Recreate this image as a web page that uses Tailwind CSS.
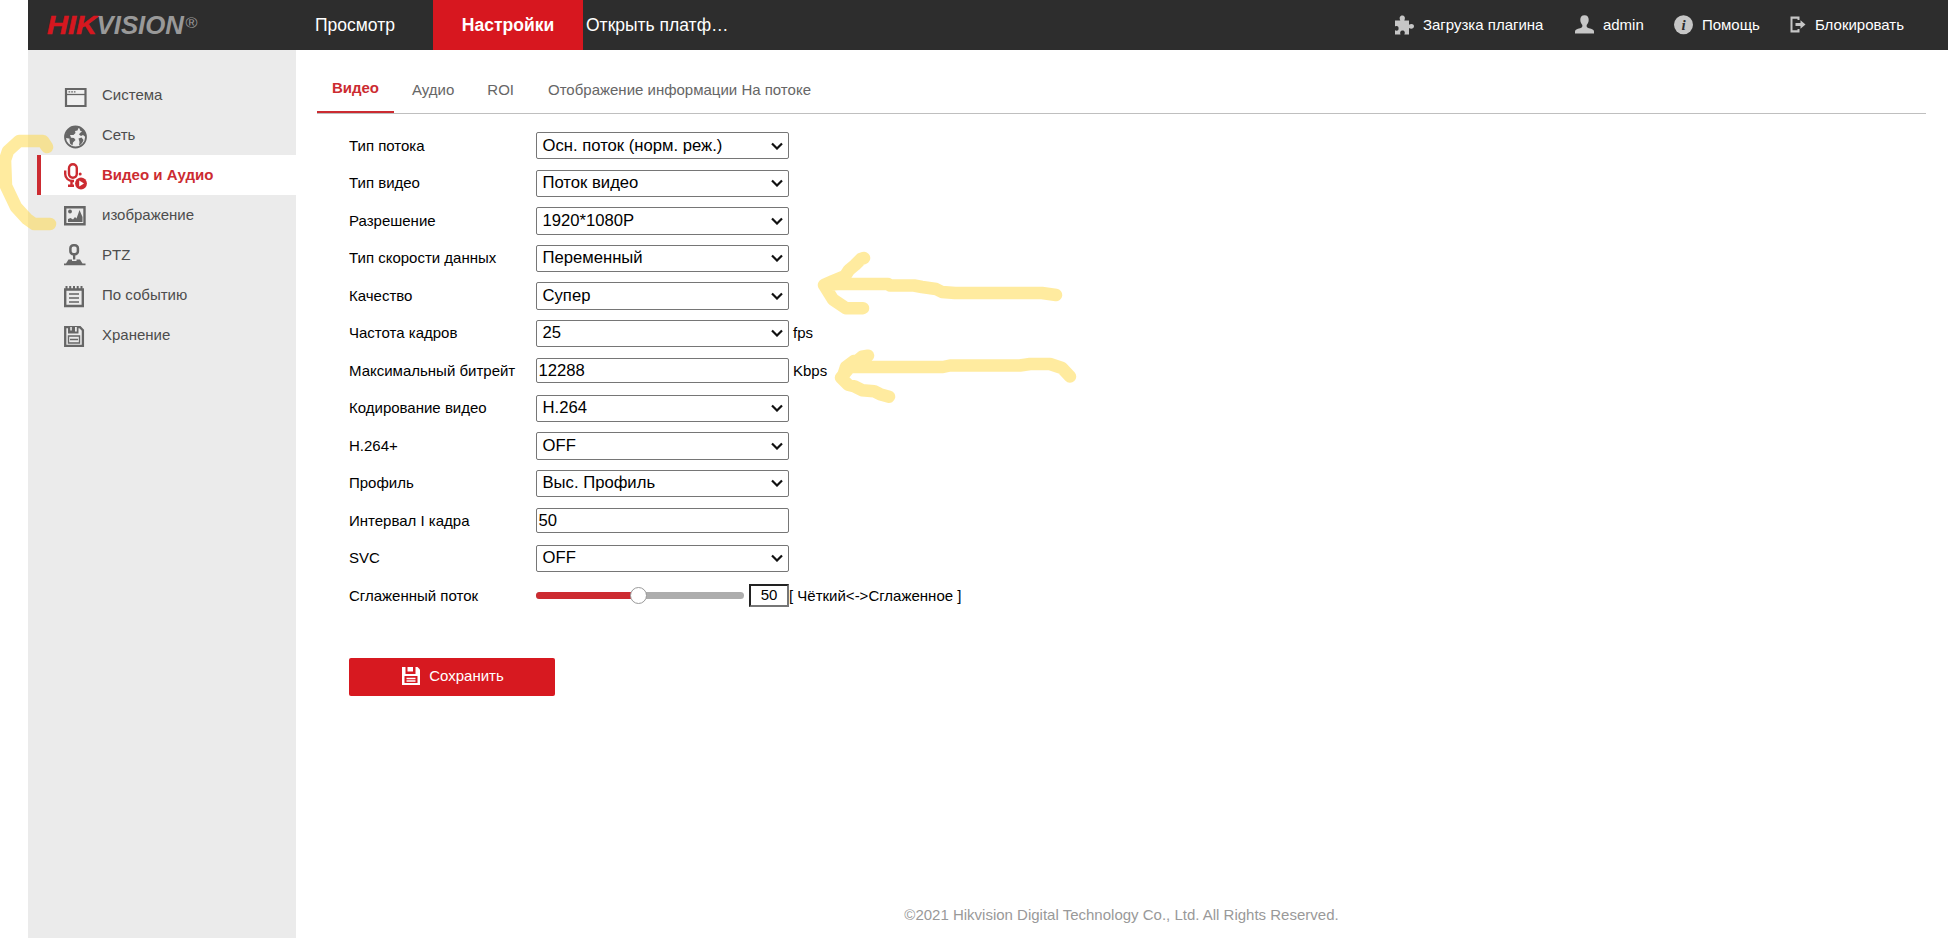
<!DOCTYPE html>
<html lang="ru">
<head>
<meta charset="utf-8">
<title>HIKVISION</title>
<script src="https://cdn.jsdelivr.net/npm/@tailwindcss/browser@4"></script>
</head>
<body class="relative h-[938px] w-[1948px] overflow-hidden bg-white pl-7 text-[15px] leading-5 text-black font-['Liberation_Sans',Arial,sans-serif]">
<header class="flex h-[50px] items-center bg-[#2d2d2d] text-white">
  <svg class="ml-4 h-[50px] w-[170px] shrink-0" viewBox="44 0 170 50" font-family="Liberation Sans" font-weight="bold" font-style="italic" font-size="25">
    <text x="47" y="33.5" fill="#d7171f" stroke="#d7171f" stroke-width=".5" textLength="50" lengthAdjust="spacingAndGlyphs">HIK</text>
    <text x="96.500" y="33.5" fill="#999" textLength="87.500" lengthAdjust="spacingAndGlyphs">VISION</text>
    <text x="185.500" y="27.500" fill="#999" font-size="15" font-weight="normal" font-style="normal" textLength="12" lengthAdjust="spacingAndGlyphs">®</text>
  </svg>
  <nav class="ml-[68px] flex h-full items-center text-[17.5px]">
    <a class="flex h-full w-[151px] items-center pl-[33px]">Просмотр</a>
    <a class="flex h-full w-[150px] items-center justify-center bg-[#d7171f] font-bold">Настройки</a>
    <a class="w-[150px] truncate pl-[3px]">Открыть платф…</a>
  </nav>
  <div class="ml-auto flex items-center pr-11">
    <svg class="mr-[9px] h-5 w-[19px]" viewBox="0 0 19 20" fill="#c6c6c6"><path d="M0 5.500h5.300C4 3 4.800.5 7.300.5S10.600 3 9.300 5.500H14v4.200c2.200-1.400 5-.8 5 1.600s-2.800 3.200-5 1.800V19.500H9.300c1.200-2.200.2-4-1.800-4s-3 1.800-2 4H0v-4.300c2 1 3.600.2 3.600-1.800S2 10.500 0 11.500z"/></svg>
    <span class="w-[152px]">Загрузка плагина</span>
    <svg class="mr-[9px] h-5 w-[19px]" viewBox="0 0 19 20" fill="#c6c6c6"><path d="M9.500.2c3 0 4.200 1.800 4.200 4.600 0 2.400-1 3.800-2 5.200-.3 1.800.2 2.700 2.300 3.200 3 .7 5 1.300 5 3.300v2H0v-2c0-2 2-2.600 5-3.300 2.100-.5 2.600-1.400 2.300-3.200-1-1.400-2-2.800-2-5.200C5.300 2 6.500.2 9.500.2z"/></svg>
    <span class="w-[71px]">admin</span>
    <svg class="mr-[9px] h-5 w-[19px]" viewBox="0 0 19 20"><circle cx="9.500" cy="9.700" r="9.500" fill="#c6c6c6"/><text x="9.500" y="14.500" text-anchor="middle" font-family="Liberation Serif" font-size="15" font-weight="bold" font-style="italic" fill="#2d2d2d">i</text></svg>
    <span class="w-[88px]">Помощь</span>
    <svg class="mr-[9px] h-[18px] w-4" viewBox="0 0 16 18" fill="#c6c6c6"><path d="M.5 .500h9v3.500H7.500V2.700h-5v11.600h5V13h2v3.500h-9z"/><path d="M5.500 7H10.500V4.300L15.500 8.500 10.500 12.700V10H5.500z"/></svg>
    <span>Блокировать</span>
  </div>
</header>
<div class="flex h-[888px]">
  <aside class="w-[268px] shrink-0 bg-[#ebebeb] pt-[25px] text-[#4d4d4d]">
    <a class="flex h-10 items-center gap-[15px] pl-[36px]">
      <svg class="mt-[5px] h-[28px] w-[23px]" viewBox="0 0 23 28" fill="none" stroke="#666"><path d="M2 5h19.500v17H2z" fill="#f0f0f0" stroke-width="2.200"/><path d="M2 10.500h19" stroke-width="1.300"/><path d="M4.500 7.800h7" stroke-dasharray="1.700 1" stroke-width="1.200"/></svg><span>Система</span></a>
    <a class="flex h-10 items-center gap-[15px] pl-[36px]">
      <svg class="mt-[1px] h-[28px] w-[23px]" viewBox="0 0 23 28"><circle cx="11.500" cy="15" r="10.500" fill="#ebebeb" stroke="#666" stroke-width="1.800"/><path fill="#666" d="M2 16C1 9 6 4 12 4.500l2.500 1.500-1 2.500-2.500.5.500 2-2 2H6l1 2.500-2 1zM5.500 15.500l4.500.5 1.500 2-2.500 2.500-.5 3-2.500-2-.5-4zM15.500 5.500c3.500 1 6.500 5 6 9.500l-2.500-2-2 1-2-1.500 1-1.500 2-1.500-2-1zM14.500 16.500l3-1 2 2.500c-1 3-2.500 4.500-4.500 5.500l.5-3.500z"/></svg><span>Сеть</span></a>
    <a class="ml-[9px] flex h-10 items-center gap-[15px] border-l-4 border-[#cc2b31] bg-white pl-[23px] font-bold text-[#cc2b31]">
      <svg class="mt-[2px] h-[28px] w-[23px]" viewBox="0 0 23 28" fill="none" stroke="#cc2b31"><rect x="5" y="2.200" width="7.800" height="13.500" rx="3.900" stroke-width="2.400"/><path d="M1.200 8.500v3.500c0 4 3.300 7 7.300 7h1.500M4 23.700h6M7.500 19v4" stroke-width="2.400"/><circle cx="16.200" cy="12" r="1.500" fill="#cc2b31" stroke="none"/><circle cx="17" cy="21.500" r="5.900" fill="#cc2b31" stroke="none"/><path d="M15.200 18.500v6l4.800-3z" fill="#fff" stroke="none"/></svg><span>Видео и Аудио</span></a>
    <a class="flex h-10 items-center gap-[15px] pl-[36px]">
      <svg class="h-[28px] w-[23px]" viewBox="0 0 23 28"><path d="M1.200 6.200h19.300v17H1.200z" fill="none" stroke="#666" stroke-width="2.400"/><circle cx="6" cy="10.500" r="1.900" fill="#666"/><path d="M4 21v-3l2.500-1 2.500 1.500 2-2.500 1.500 1.500 2-5.500L15.500 9l3 7v5z" fill="#666"/></svg><span>изображение</span></a>
    <a class="flex h-10 items-center gap-[15px] pl-[36px]">
      <svg class="h-[28px] w-[23px]" viewBox="0 0 23 28"><rect x="6.400" y="4.300" width="7.500" height="9" rx="3" fill="none" stroke="#666" stroke-width="2.500"/><path d="M9 14h2.300v4.500H9zM4.500 18.500h3.500v1.500h4.500v-1.500h3.500l2.500 4h3v1.700H-.5v-1.700h2.500z" fill="#666"/></svg><span>PTZ</span></a>
    <a class="flex h-10 items-center gap-[15px] pl-[36px]">
      <svg class="mt-1 h-[28px] w-[23px]" viewBox="0 0 23 28" fill="none" stroke="#666"><path d="M1.200 6.500h17.600v16.500H1.200z" stroke-width="2.400"/><path d="M2.500 3v3.500M6.200 3v3.500M10 3v3.500M13.700 3v3.500M17.500 3v3.500" stroke-width="2"/><path d="M5 11h10M5 15h10M5 19h10" stroke-width="1.400"/></svg><span>По событию</span></a>
    <a class="flex h-10 items-center gap-[15px] pl-[36px]">
      <svg class="mt-[2px] h-[28px] w-[23px]" viewBox="0 0 23 28" fill="none" stroke="#666"><path d="M1.200 5.100H16l2.900 3v15.700H1.200z" stroke-width="2.300"/><path d="M4 5h10.500v6.500H4z" fill="#666" stroke="none"/><path d="M6.300 5h1.500v3.500H6.300zM11 5h1.800v4.500H11z" fill="#ebebeb" stroke="none"/><path d="M4.500 21v-7h11v7zM6 17.500h8" stroke-width="1.400"/></svg><span>Хранение</span></a>
  </aside>
  <main class="flex min-w-0 grow flex-col">
    <div class="ml-[21px] mr-[22px] flex h-16 items-end border-b border-[#bfbfbf] text-[#666]">
      <span class="h-[35px] w-[77px] border-b-2 border-[#cc2b31] text-center font-bold text-[#cc2b31]">Видео</span>
      <span class="h-[33px] pl-[18px]">Аудио</span>
      <span class="h-[33px] pl-[33px]">ROI</span>
      <span class="h-[33px] pl-[34px]">Отображение информации На потоке</span>
    </div>
    <div class="ml-[53px] mt-[13px] grid auto-rows-[37.5px] grid-cols-[187px_253px_auto] items-center">
      <span>Тип потока</span><div class="flex h-[27px] items-center justify-between rounded-xs border border-[#767676] pl-[5.5px] pr-[5px] text-[16.67px]"><span>Осн. поток (норм. реж.)</span><svg class="h-2 w-3" viewBox="0 0 12 8" fill="none" stroke="#111" stroke-width="2.200"><path d="M1 1.500l5 5 5-5"/></svg></div><span></span>
      <span>Тип видео</span><div class="flex h-[27.5px] items-center justify-between rounded-xs border border-[#767676] pl-[5.5px] pr-[5px] text-[16.67px]"><span>Поток видео</span><svg class="h-2 w-3" viewBox="0 0 12 8" fill="none" stroke="#111" stroke-width="2.200"><path d="M1 1.500l5 5 5-5"/></svg></div><span></span>
      <span>Разрешение</span><div class="flex h-[27.5px] items-center justify-between rounded-xs border border-[#767676] pl-[5.5px] pr-[5px] text-[16.67px]"><span>1920*1080P</span><svg class="h-2 w-3" viewBox="0 0 12 8" fill="none" stroke="#111" stroke-width="2.200"><path d="M1 1.500l5 5 5-5"/></svg></div><span></span>
      <span>Тип скорости данных</span><div class="flex h-[27.5px] items-center justify-between rounded-xs border border-[#767676] pl-[5.5px] pr-[5px] text-[16.67px]"><span>Переменный</span><svg class="h-2 w-3" viewBox="0 0 12 8" fill="none" stroke="#111" stroke-width="2.200"><path d="M1 1.500l5 5 5-5"/></svg></div><span></span>
      <span>Качество</span><div class="flex h-[27.5px] items-center justify-between rounded-xs border border-[#767676] pl-[5.5px] pr-[5px] text-[16.67px]"><span>Супер</span><svg class="h-2 w-3" viewBox="0 0 12 8" fill="none" stroke="#111" stroke-width="2.200"><path d="M1 1.500l5 5 5-5"/></svg></div><span></span>
      <span>Частота кадров</span><div class="flex h-[27.5px] items-center justify-between rounded-xs border border-[#767676] pl-[5.5px] pr-[5px] text-[16.67px]"><span>25</span><svg class="h-2 w-3" viewBox="0 0 12 8" fill="none" stroke="#111" stroke-width="2.200"><path d="M1 1.500l5 5 5-5"/></svg></div><span class="pl-1">fps</span>
      <span>Максимальный битрейт</span><div class="flex h-[25px] items-center rounded-xs border border-[#767676] pl-[1.5px] text-[16.67px]">12288</div><span class="pl-1">Kbps</span>
      <span>Кодирование видео</span><div class="flex h-[27.5px] items-center justify-between rounded-xs border border-[#767676] pl-[5.5px] pr-[5px] text-[16.67px]"><span>H.264</span><svg class="h-2 w-3" viewBox="0 0 12 8" fill="none" stroke="#111" stroke-width="2.200"><path d="M1 1.500l5 5 5-5"/></svg></div><span></span>
      <span>H.264+</span><div class="flex h-[27.5px] items-center justify-between rounded-xs border border-[#767676] pl-[5.5px] pr-[5px] text-[16.67px]"><span>OFF</span><svg class="h-2 w-3" viewBox="0 0 12 8" fill="none" stroke="#111" stroke-width="2.200"><path d="M1 1.500l5 5 5-5"/></svg></div><span></span>
      <span>Профиль</span><div class="flex h-[27.5px] items-center justify-between rounded-xs border border-[#767676] pl-[5.5px] pr-[5px] text-[16.67px]"><span>Выс. Профиль</span><svg class="h-2 w-3" viewBox="0 0 12 8" fill="none" stroke="#111" stroke-width="2.200"><path d="M1 1.500l5 5 5-5"/></svg></div><span></span>
      <span>Интервал I кадра</span><div class="flex h-[25px] items-center rounded-xs border border-[#767676] pl-[1.5px] text-[16.67px]">50</div><span></span>
      <span>SVC</span><div class="flex h-[27.5px] items-center justify-between rounded-xs border border-[#767676] pl-[5.5px] pr-[5px] text-[16.67px]"><span>OFF</span><svg class="h-2 w-3" viewBox="0 0 12 8" fill="none" stroke="#111" stroke-width="2.200"><path d="M1 1.500l5 5 5-5"/></svg></div><span></span>
      <span>Сглаженный поток</span>
      <div class="flex items-center gap-[5px]">
        <div class="flex h-[7px] w-[208px] items-center rounded-full bg-[#adadad]"><div class="h-[7px] w-[100px] rounded-l-full bg-[#cc2b31]"></div><div class="-ml-[6px] size-[17px] rounded-full border border-[#999] bg-white"></div></div>
        <div class="flex h-[23px] w-10 items-center justify-center border-2 border-t-[#222] border-r-[#767676] border-b-[#767676] border-l-[#222] pb-px">50</div>
      </div>
      <span class="whitespace-nowrap">[ Чёткий&lt;-&gt;Сглаженное ]</span>
    </div>
    <button class="ml-[53px] mt-[43px] flex h-[38px] w-[206px] items-center justify-center gap-[9px] rounded-xs bg-[#d71920] pb-[2px] pl-[2px] text-white">
      <svg class="h-[18px] w-[18px]" viewBox="0 0 18 18"><path fill="#fff" d="M0 0h15.500L18 2.500V18H0z"/><path fill="#d71920" d="M3.500 0h2v4.500h5.500V0h2.500v7h-10zM2.500 9h13v7h-13z"/><path stroke="#fff" stroke-width="1.300" d="M4.500 11.500h9M4.500 14h9"/></svg>
      <span>Сохранить</span>
    </button>
    <footer class="mt-auto pb-[13px] pr-px text-center text-[#999]">©2021 Hikvision Digital Technology Co., Ltd. All Rights Reserved.</footer>
  </main>
</div>
<svg class="pointer-events-none absolute left-0 top-0 h-[938px] w-[1948px]" viewBox="0 0 1948 938" fill="none" stroke="#ffd840" stroke-width="12.500" stroke-linecap="round" stroke-linejoin="round">
  <path opacity=".5" d="M47 147l-4-6H19L8 151l-3 9 1 26 10 21 11 12 7 5h16"/>
  <path opacity=".5" d="M864 258l-3 1-6 6-6 5-4 6-12 5-9 4 9 14.500 13 8.700h17M824 285l14-1h50l2 1.500h24l8 1.500 14 2 6 3 13 1h87l14 2"/>
  <path opacity=".5" d="M868 355.700l-6 1-12 10-9 11 7 7 6 1.500 8 4 12 1 6 3 9 2.500M846 367h97l7-1.500h70l10-1.500h20l12 4 8 8.500M854 361l-8 6-3 9"/>
</svg>
</body>
</html>
